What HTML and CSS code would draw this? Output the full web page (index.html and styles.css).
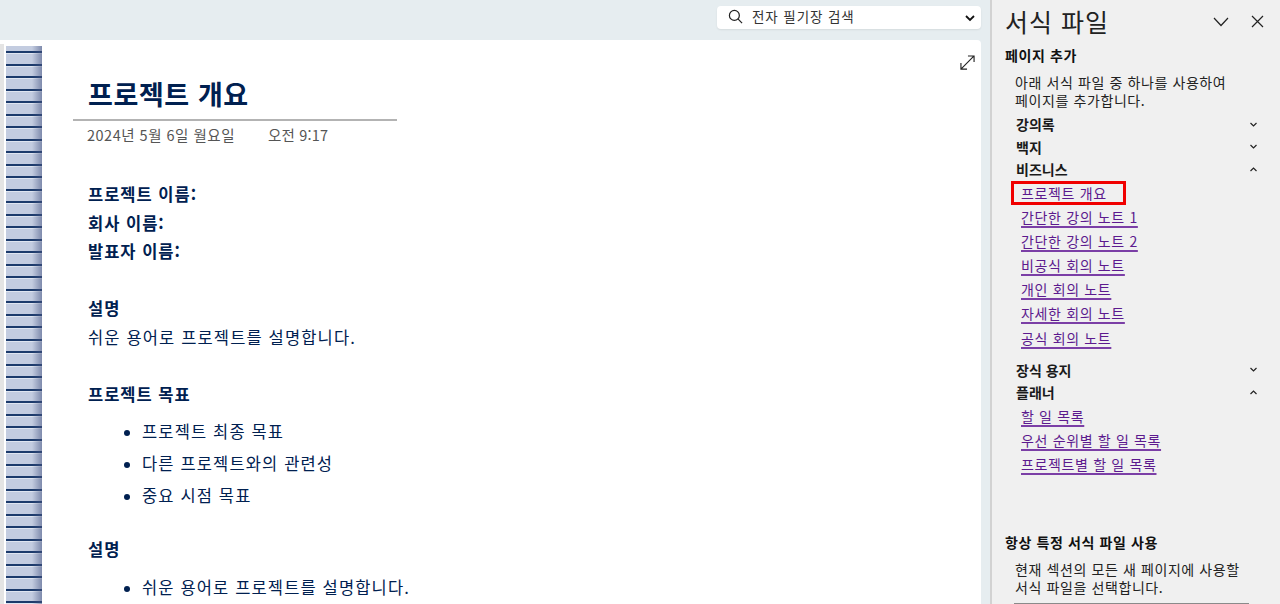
FILE: index.html
```html
<!DOCTYPE html>
<html lang="ko">
<head>
  <meta charset="UTF-8">
  <title>서식 파일</title>
  <link rel="stylesheet" href="styles.css">
</head>
<body>
  <div class="app">
    <main class="main">
      <div class="topbar">
        <div class="search">
          <svg class="search-icon" width="15" height="15" viewBox="0 0 16 16"><circle cx="6.8" cy="6.8" r="5.3" fill="none" stroke="#222" stroke-width="1.3"/><path d="M10.6 10.6 L15 15" stroke="#222" stroke-width="1.3" fill="none"/></svg>
          <span class="search-text">전자 필기장 검색</span>
          <svg class="search-chev" width="10" height="7" viewBox="0 0 10 7"><path d="M1 1 L5 5 L9 1" fill="none" stroke="#111" stroke-width="1.8"/></svg>
        </div>
      </div>
      <div class="page">
        <div class="gutter"></div>
        <div class="binding"></div>
        <div class="note">
          <svg class="expand" width="15" height="15" viewBox="0 0 16 16"><path d="M1 15 L15 1 M8.5 1 H15 V7.5 M1 8.5 V15 H7.5" fill="none" stroke="#222" stroke-width="1.2"/></svg>
          <div class="note-head">
            <h1>프로젝트 개요</h1>
            <div class="note-date"><span>2024년 5월 6일 월요일</span><span class="note-time">오전 9:17</span></div>
          </div>
          <div class="note-body">
            <p class="b">프로젝트 이름:</p>
            <p class="b">회사 이름:</p>
            <p class="b">발표자 이름:</p>
            <p class="b sec">설명</p>
            <p>쉬운 용어로 프로젝트를 설명합니다.</p>
            <p class="b sec">프로젝트 목표</p>
            <ul>
              <li>프로젝트 최종 목표</li>
              <li>다른 프로젝트와의 관련성</li>
              <li>중요 시점 목표</li>
            </ul>
            <p class="b sec2">설명</p>
            <ul>
              <li>쉬운 용어로 프로젝트를 설명합니다.</li>
            </ul>
          </div>
        </div>
      </div>
    </main>
    <aside class="panel">
      <div class="panel-head">
        <span class="panel-title">서식 파일</span>
        <svg class="panel-chev" width="16" height="10" viewBox="0 0 16 10"><path d="M1 1 L8 8.5 L15 1" fill="none" stroke="#222" stroke-width="1.2"/></svg>
        <svg class="panel-close" width="13" height="13" viewBox="0 0 13 13"><path d="M1 1 L12 12 M12 1 L1 12" fill="none" stroke="#222" stroke-width="1.2"/></svg>
      </div>
      <h2>페이지 추가</h2>
      <p class="desc">아래 서식 파일 중 하나를 사용하여<br>페이지를 추가합니다.</p>
      <div class="cat first">강의록<svg width="7" height="5" viewBox="0 0 7 5"><path d="M.5 1 L3.5 4 L6.5 1" fill="none" stroke="#222" stroke-width="1.2"/></svg></div>
      <div class="cat">백지<svg width="7" height="5" viewBox="0 0 7 5"><path d="M.5 1 L3.5 4 L6.5 1" fill="none" stroke="#222" stroke-width="1.2"/></svg></div>
      <div class="cat">비즈니스<svg width="7" height="5" viewBox="0 0 7 5"><path d="M.5 4 L3.5 1 L6.5 4" fill="none" stroke="#222" stroke-width="1.2"/></svg></div>
      <div class="links">
        <a class="link selected" href="#">프로젝트 개요</a>
        <a class="link" href="#">간단한 강의 노트 1</a>
        <a class="link" href="#">간단한 강의 노트 2</a>
        <a class="link" href="#">비공식 회의 노트</a>
        <a class="link" href="#">개인 회의 노트</a>
        <a class="link" href="#">자세한 회의 노트</a>
        <a class="link" href="#">공식 회의 노트</a>
      </div>
      <div class="cat gap">장식 용지<svg width="7" height="5" viewBox="0 0 7 5"><path d="M.5 1 L3.5 4 L6.5 1" fill="none" stroke="#222" stroke-width="1.2"/></svg></div>
      <div class="cat">플래너<svg width="7" height="5" viewBox="0 0 7 5"><path d="M.5 4 L3.5 1 L6.5 4" fill="none" stroke="#222" stroke-width="1.2"/></svg></div>
      <div class="links">
        <a class="link" href="#">할 일 목록</a>
        <a class="link" href="#">우선 순위별 할 일 목록</a>
        <a class="link" href="#">프로젝트별 할 일 목록</a>
      </div>
      <h2 class="always">항상 특정 서식 파일 사용</h2>
      <p class="desc">현재 섹션의 모든 새 페이지에 사용할<br>서식 파일을 선택합니다.</p>
      <div class="select"><span class="select-btn"></span></div>
    </aside>
  </div>
</body>
</html>
```

FILE: styles.css
```css
html, body {
  height: 100%;
  margin: 0;
  padding: 0;
  overflow: hidden;
  font-family: "Noto Sans CJK KR", "Noto Sans", sans-serif;
  background-color: #f0f0f0;
}

.app {
  display: flex;
  height: 604px;
  overflow: hidden;
}

.main {
  width: 990px;
  flex: none;
  background-color: #e6edf0;
  border-right: 2px solid #d2d2d2;
  display: flex;
  flex-direction: column;
}

.topbar {
  height: 40px;
  flex: none;
  display: flex;
  justify-content: flex-end;
  align-items: flex-start;
  padding: 6px 9px 0 0;
  box-sizing: border-box;
}

.search {
  width: 264px;
  height: 23px;
  background-color: #fff;
  border-radius: 4px;
  display: flex;
  align-items: center;
  padding: 0 6px 0 11px;
  box-sizing: border-box;
  box-shadow: 0 1px 2px rgba(0, 0, 0, 0.08);
}

.search-icon {
  margin-bottom: 3px;
}

.search-text {
  font-size: 13.5px;
  letter-spacing: 0.9px;
  color: #333;
  margin: 0 0 4px 9px;
  flex: 1;
}

.search-chev {
  margin-top: 2px;
}

.page {
  flex: 1;
  display: flex;
  background-color: #fff;
  border-top-right-radius: 4px;
  margin-right: 9px;
  padding-top: 4px;
  min-height: 0;
}

.gutter {
  width: 4px;
  flex: none;
  background-color: #e4e4e4;
}

/* two rings per 25px so the lines land on whole pixels */
.binding {
  width: 36px;
  margin: 2px 0 0 2px;
  flex: none;
  background:
    linear-gradient(to right, rgba(70, 85, 130, 0) 72%, rgba(70, 85, 130, 0.55) 100%),
    repeating-linear-gradient(to bottom,
      #c3cce0 0, #c3cce0 5px, #1b3a6b 5px, #1b3a6b 7px, #dfe5f0 7px, #dfe5f0 8px,
      #c3cce0 8px, #c3cce0 18px, #1b3a6b 18px, #1b3a6b 20px, #dfe5f0 20px, #dfe5f0 21px,
      #c3cce0 21px, #c3cce0 25px);
}

.note {
  position: relative;
  flex: 1;
  min-width: 0;
  padding-left: 31px;
  color: #002050;
}

.expand {
  position: absolute;
  top: 11px;
  right: 6px;
}

.note-head {
  width: 324px;
}

h1 {
  font-size: 27px;
  font-weight: 700;
  letter-spacing: 0.6px;
  line-height: 40px;
  margin: 30px 0 0;
  padding: 0 0 5px 15px;
  color: #002050;
  border-bottom: 2px solid #b3b3b3;
}

.note-date {
  margin: 3px 0 0 14px;
  font-size: 14.5px;
  letter-spacing: 0.5px;
  line-height: 22px;
  color: #555;
  display: flex;
  gap: 33px;
}

.note-time {
  letter-spacing: 0.2px;
}

.note-body {
  margin: 34px 0 0 15px;
  font-size: 16.5px;
  letter-spacing: 1.15px;
  line-height: 28.5px;
}

.note-body p {
  margin: 0;
}

.note-body .b {
  font-weight: 700;
  letter-spacing: 1px;
}

.note-body .sec {
  margin-top: 28.5px;
}

.note-body .sec2 {
  margin-top: 24px;
}

ul {
  margin: 7px 0 0;
  padding: 0 0 0 54px;
}

li {
  line-height: 32px;
}

li::marker {
  font-size: 15px;
}

.panel {
  flex: 1;
  min-width: 0;
  padding: 0 0 0 13px;
  color: #1a1a1a;
  font-size: 14px;
  overflow: hidden;
}

.panel-head {
  height: 43px;
  display: flex;
  align-items: center;
}

.panel-title {
  font-size: 25px;
  letter-spacing: 1px;
  line-height: 43px;
  flex: 1;
  color: #222;
}

.panel-chev {
  margin-right: 22px;
}

.panel-close {
  margin-right: 16px;
}

h2 {
  font-size: 14px;
  font-weight: 700;
  letter-spacing: 0.6px;
  line-height: 24px;
  margin: 0;
  color: #111;
}

.desc {
  margin: 6px 0 0 10px;
  line-height: 18px;
  letter-spacing: 0.6px;
  color: #222;
}

.cat {
  margin-left: 11px;
  margin-right: 23px;
  height: 22.5px;
  line-height: 22.5px;
  font-weight: 700;
  display: flex;
  justify-content: space-between;
  align-items: center;
}

.cat.first {
  margin-top: 4px;
}

.cat.gap {
  margin-top: 9px;
}

.links {
  display: flex;
  flex-direction: column;
  align-items: flex-start;
  margin-left: 16px;
}

.link {
  color: #5c1a8e;
  line-height: 24.2px;
  letter-spacing: 0.65px;
  text-decoration: underline;
  text-decoration-color: #7b3fa6;
  text-decoration-thickness: 2px;
  text-decoration-skip-ink: none;
  text-underline-offset: 3px;
}

.selected {
  outline: 3px solid #f00000;
  outline-offset: -1px;
  padding: 0 17px 0 8px;
  margin: 2px 0 2px -8px;
  line-height: 20px;
  text-decoration-thickness: 1px;
  text-decoration-color: #5c1a8e;
}

.always {
  margin-top: 54px;
}

.select {
  margin: 7px 31px 0 9px;
  height: 22px;
  background-color: #fff;
  border: 1px solid #8a8a8a;
  display: flex;
  justify-content: flex-end;
}

.select-btn {
  width: 18px;
  border-left: 1px solid #8a8a8a;
}
```
